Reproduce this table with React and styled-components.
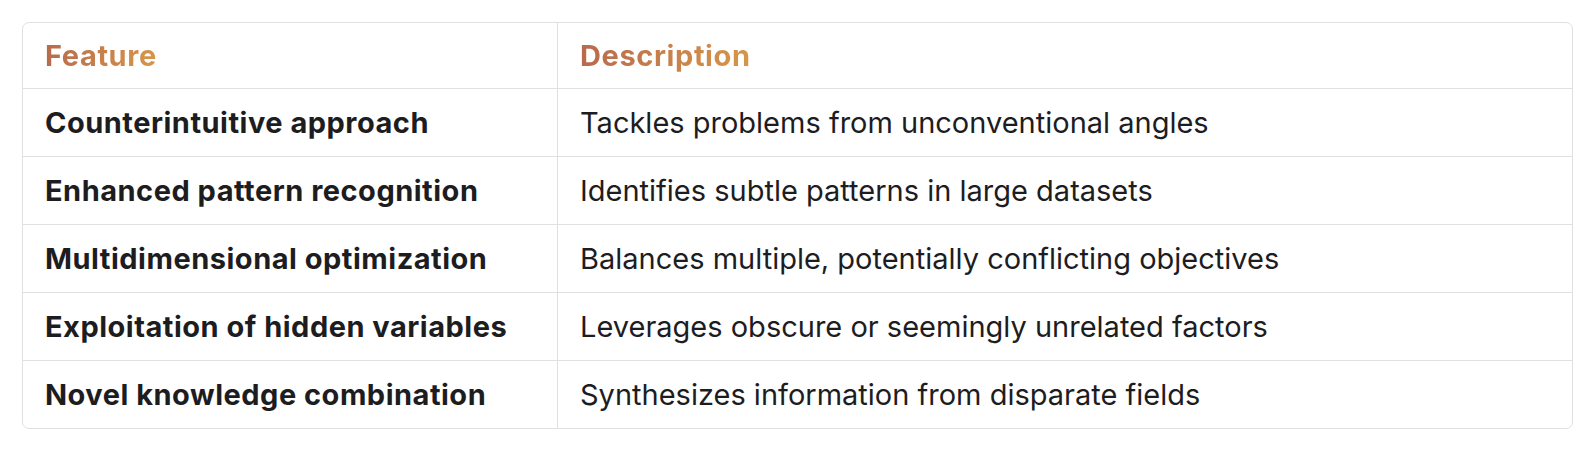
import React from "react";
import styled, { createGlobalStyle } from "styled-components";

const rows = [
  ["Counterintuitive approach", "Tackles problems from unconventional angles"],
  ["Enhanced pattern recognition", "Identifies subtle patterns in large datasets"],
  ["Multidimensional optimization", "Balances multiple, potentially conflicting objectives"],
  ["Exploitation of hidden variables", "Leverages obscure or seemingly unrelated factors"],
  ["Novel knowledge combination", "Synthesizes information from disparate fields"],
];

function App() {
  return (
    <>
      <GlobalStyle />
      <Page>
        <Frame>
          <HeadCell first>
            <HeadText>Feature</HeadText>
          </HeadCell>
          <HeadCell>
            <HeadText>Description</HeadText>
          </HeadCell>
          {rows.map(([feature, description], i) => {
            const last = i === rows.length - 1;
            return (
              <React.Fragment key={feature}>
                <Cell first last={last} bold>
                  {feature}
                </Cell>
                <Cell last={last}>{description}</Cell>
              </React.Fragment>
            );
          })}
        </Frame>
      </Page>
    </>
  );
}

const GlobalStyle = createGlobalStyle`
  body {
    margin: 0;
    background: #ffffff;
    font-family: Inter, "Noto Sans", sans-serif;
  }
`;

const Page = styled.div`
  padding: 22px 21px 22px 22px;
`;

const Frame = styled.div`
  display: grid;
  grid-template-columns: 535px 1fr;
  border: 1px solid #e0e0e0;
  border-radius: 7px;
  overflow: hidden;
`;

const BaseCell = styled.div`
  box-sizing: border-box;
  display: flex;
  align-items: center;
  padding: 0 22px;
  border-right: ${props => (props.first ? "1px solid #e0e0e0" : "none")};
`;

const HeadCell = styled(BaseCell)`
  height: 66px;
  border-bottom: 1px solid #e0e0e0;
`;

const HeadText = styled.span`
  font-size: 29px;
  font-weight: 700;
  letter-spacing: 0.6px;
  background: linear-gradient(90deg, #b86a4c 0%, #d6964a 100%);
  -webkit-background-clip: text;
  background-clip: text;
  color: transparent;
`;

const Cell = styled(BaseCell)`
  height: ${props => (props.last ? "67px" : "68px")};
  border-bottom: ${props => (props.last ? "none" : "1px solid #e0e0e0")};
  font-size: 29px;
  font-weight: ${props => (props.bold ? 700 : 400)};
  letter-spacing: ${props => (props.bold ? "0.5px" : "0")};
  color: #1d1d1f;
`;

export default App;
